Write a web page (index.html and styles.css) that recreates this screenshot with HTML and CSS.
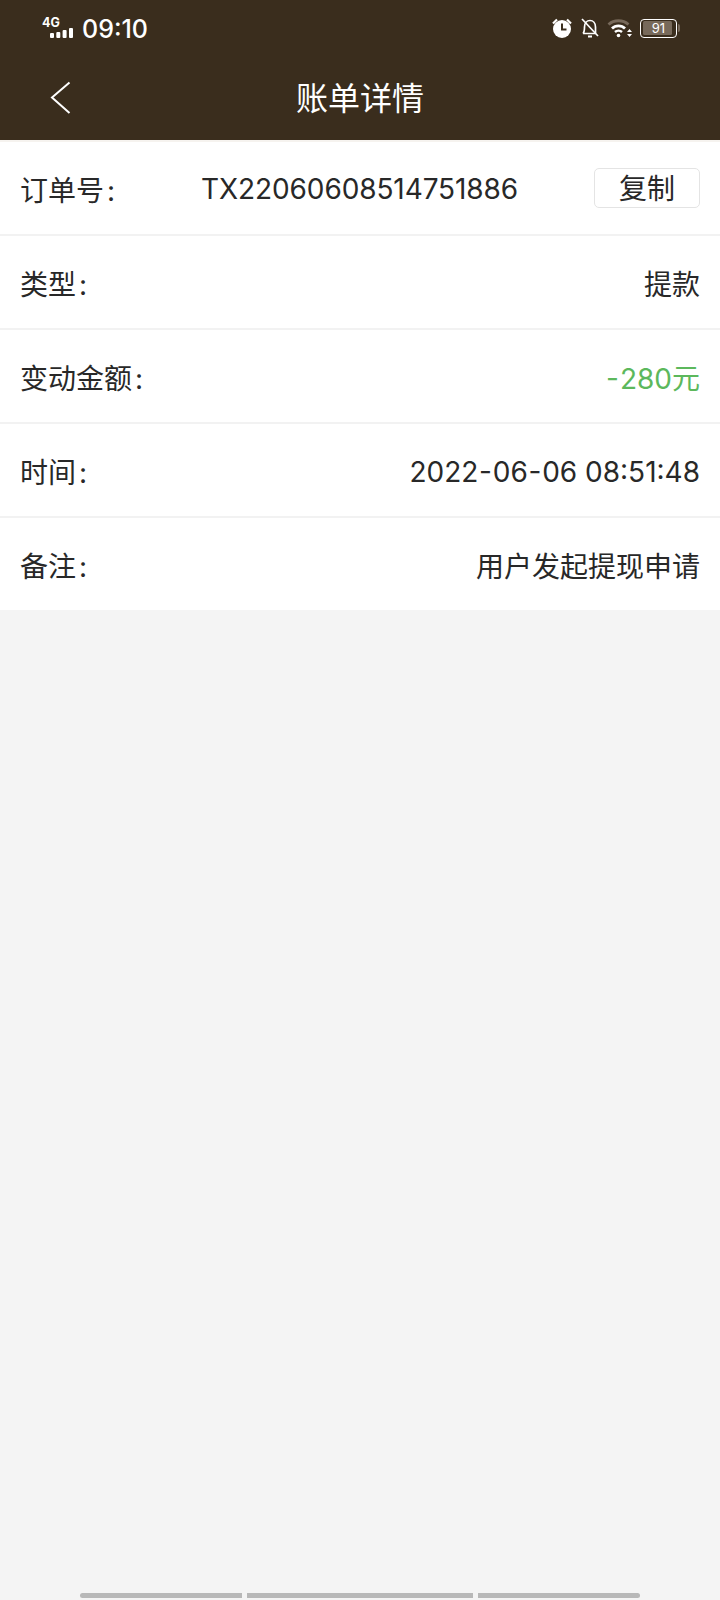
FILE: index.html
```html
<!DOCTYPE html>
<html lang="zh-CN">
<head>
<meta charset="utf-8">
<title>账单详情</title>
<link rel="stylesheet" href="styles.css">
</head>
<body>
<div class="screen">
  <header class="top">
    <div class="status">
      <div class="status-left">
        <div class="net">
          <span class="net-label">4G</span>
          <svg class="net-bars" width="23" height="10" viewBox="0 0 23 10"><rect x="0" y="5" width="4" height="5" rx="1"/><rect x="6.300" y="4" width="4" height="6" rx="1"/><rect x="12.600" y="2" width="4" height="8" rx="1"/><rect x="19" y="0" width="4" height="10" rx="1"/></svg>
        </div>
        <span class="clock">09:10</span>
      </div>
      <div class="status-right">
        <svg class="ic-alarm" width="22" height="22" viewBox="0 0 22 22"><circle cx="11" cy="12" r="9" fill="#fff"/><path d="M2 6.500 6 2.500M20 6.500 16 2.500" stroke="#fff" stroke-width="2.200" fill="none"/><path d="M11 6.500V12.500H15.500" stroke="#3a2d1d" stroke-width="2" fill="none"/></svg>
        <svg class="ic-bell" width="20" height="22" viewBox="0 0 20 22"><path d="M3 16.500H15.500M3 16.500C4.500 15 4.500 13 4.500 10C4.500 6 7 3.500 10 3.500C13 3.500 15.500 6 15.500 10V16.500" fill="none" stroke="#fff" stroke-width="1.700"/><path d="M2 2 18 19" stroke="#fff" stroke-width="1.700"/><path d="M8 19.500H12" stroke="#fff" stroke-width="2"/></svg>
        <svg class="ic-wifi" width="26" height="20" viewBox="0 0 26 20"><path d="M1.500 6.500C7 1.500 16 1.500 21.500 6.500" fill="none" stroke="#77695a" stroke-width="2.800"/><path d="M5 10.500C8.500 7 14.500 7 18 10.500" fill="none" stroke="#fff" stroke-width="2.800"/><path d="M8 14C10 12.300 13 12.300 15 14" fill="none" stroke="#fff" stroke-width="2.600"/><circle cx="11.500" cy="17.500" r="1.800" fill="#fff"/><path d="M22.500 11 25 14H20ZM22.500 19 20 16H25Z" fill="#fff"/></svg>
        <div class="battery">
          <div class="battery-body"><div class="battery-fill"></div><span class="battery-num">91</span></div>
          <div class="battery-tip"></div>
        </div>
      </div>
    </div>
    <div class="nav">
      <svg class="back" width="22" height="34" viewBox="0 0 22 34"><path d="M19.500 1.500 2 16.500 19.500 32" fill="none" stroke="#fff" stroke-width="2"/></svg>
      <h1 class="title">账单详情</h1>
    </div>
  </header>
  <main class="list">
    <div class="row"><span class="label">订单号<span class="colon">:</span></span><span class="order">TX22060608514751886</span><button class="copy">复制</button></div>
    <div class="row"><span class="label">类型<span class="colon">:</span></span><span class="value">提款</span></div>
    <div class="row"><span class="label">变动金额<span class="colon">:</span></span><span class="value green"><span class="dash dash-lead">-</span>280元</span></div>
    <div class="row"><span class="label">时间<span class="colon">:</span></span><span class="value">2022<span class="dash">-</span>06<span class="dash">-</span>06 08:51:48</span></div>
    <div class="row"><span class="label">备注<span class="colon">:</span></span><span class="value">用户发起提现申请</span></div>
  </main>
  <div class="gesture"><i class="seg seg-a"></i><i class="seg seg-b"></i><i class="seg seg-c"></i></div>
</div>
</body>
</html>
```
FILE: styles.css
```css
* { box-sizing: border-box; }
html, body { margin: 0; padding: 0; }
body { font-family: "Inter", "Noto Sans CJK SC", sans-serif; background: #f4f4f4; color: #282828; }
.screen { width: 720px; height: 1600px; display: flex; flex-direction: column; background: #f4f4f4; }
.top { height: 140px; background: #3a2d1d; color: #fff; flex: none; }
.status { height: 56px; padding: 0 40px 0 42px; display: flex; justify-content: space-between; align-items: center; }
.status-left { display: flex; align-items: center; gap: 10px; }
.net { width: 30px; height: 20px; display: flex; flex-direction: column; align-items: flex-start; }
.net-label { font-size: 12.500px; line-height: 10px; font-weight: 700; color: #fff; }
.net-bars { fill: #fff; margin-left: 8px; flex: none; }
.clock { font-size: 25px; line-height: 28px; font-weight: 500; color: #fff; padding-top: 2px; }
.status-right { display: flex; align-items: center; gap: 7px; }
.battery { display: flex; align-items: center; gap: 1px; }
.battery-body { position: relative; width: 37px; height: 19px; border: 1.500px solid #fff; border-radius: 4px; padding: 1.500px; }
.battery-fill { width: 91%; height: 100%; background: #77695a; border-radius: 1.500px; }
.battery-num { position: absolute; inset: 0; text-align: center; font-size: 13px; line-height: 16px; color: #fff; }
.battery-tip { width: 2px; height: 8px; background: #77695a; border-radius: 0 2px 2px 0; }
.nav { height: 84px; position: relative; display: flex; align-items: center; justify-content: center; }
.back { position: absolute; left: 50px; top: 25px; }
.title { margin: 0; padding-top: 2px; font-size: 32px; font-weight: 400; line-height: 40px; color: #fff; }
.list { background: #fff; flex: none; border-top: 2px solid #f6f3ef; }
.row { height: 94px; display: flex; align-items: center; justify-content: space-between; padding: 0 20px; border-bottom: 2px solid #f2f2f2; font-size: 28px; }
.row:last-child { height: 92px; border-bottom: 0; }
.label { flex: none; padding-top: 2px; }
.colon { margin-left: 3px; }
.order { flex: 1; text-align: center; padding: 2px 0 0 10px; letter-spacing: -0.100px; }
.value { text-align: right; padding-top: 2px; }
.dash { margin: 0 0.750px; vertical-align: 1px; }
.dash-lead { margin: 0 1px 0 0; }
.green { color: #5cb85c; }
.copy { width: 106px; height: 40px; padding: 3px 0 0; margin: 0; background: #fff; border: 1px solid #e4e4e4; border-radius: 5px; font: inherit; color: #282828; line-height: 33px; }
.gesture { margin-top: auto; height: 7px; padding: 0 80px; display: flex; gap: 5px; }
.seg { display: block; height: 5px; background: #b8b8b8; }
.seg-a { width: 162px; border-radius: 3px 0 0 3px; }
.seg-b { width: 226px; }
.seg-c { width: 162px; border-radius: 0 3px 3px 0; }
```
